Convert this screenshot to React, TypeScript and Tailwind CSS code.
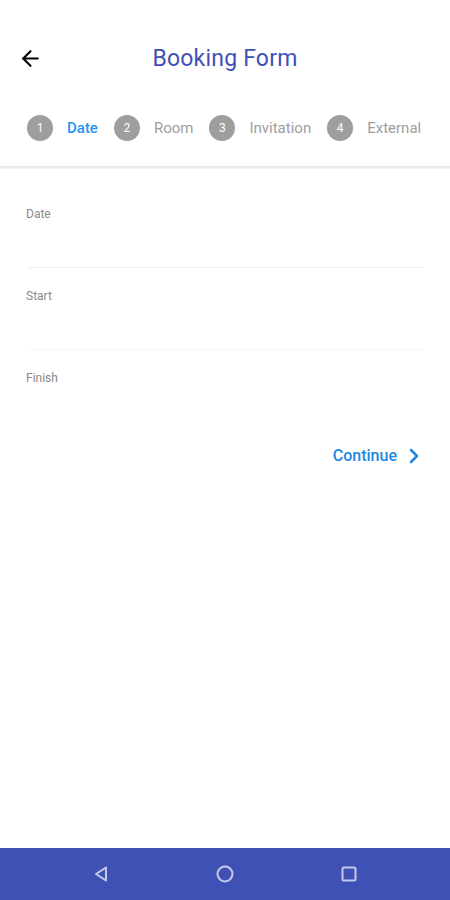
import { ArrowLeft, ChevronRight } from 'lucide-react';

const steps = [
  { n: 1, label: 'Date', active: true },
  { n: 2, label: 'Room', active: false },
  { n: 3, label: 'Invitation', active: false },
  { n: 4, label: 'External', active: false },
];

const fields = [
  { label: 'Date', line: 'border-[#f1f1f1]' },
  { label: 'Start', line: 'border-[#f6f6f6]' },
  { label: 'Finish', line: 'border-transparent' },
];

function App() {
  return (
    <div className="h-[900px] w-[450px] bg-white flex flex-col overflow-hidden font-['Roboto',sans-serif]">
      {/* Header */}
      <div className="relative mt-[35px] h-12 flex items-center justify-center">
        <button className="absolute left-[18px] top-[11px] text-black">
          <ArrowLeft size={25} strokeWidth={2} />
        </button>
        <h1 className="text-[23px] text-[#3f51b5] tracking-[0.2px]">Booking Form</h1>
      </div>

      {/* Stepper */}
      <div className="mt-[32px] pb-[25px] pl-[27px] flex items-center h-[26px] box-content">
        {steps.map((s) => (
          <div key={s.n} className="flex items-center mr-[16px]">
            <div className="w-[26px] h-[26px] rounded-full bg-[#9e9e9e] text-white text-[12px] flex items-center justify-center">
              {s.n}
            </div>
            <span
              className={
                'ml-[14px] text-[15px] ' + (s.active ? 'text-[#2196f3] font-medium' : 'text-[#9e9e9e]')
              }
            >
              {s.label}
            </span>
          </div>
        ))}
      </div>
      <div className="h-[3px] bg-gradient-to-b from-[#e6e6e6] to-[#f7f7f7]" />

      {/* Form */}
      <div className="px-[26px] pt-[37px] flex flex-col">
        {fields.map((f) => (
          <div key={f.label} className="mb-[20px]">
            <div className="text-[12px] leading-4 text-[#8a8a8a]">{f.label}</div>
            <div className={'h-[46px] ml-[2px] border-b ' + f.line} />
          </div>
        ))}
        <div className="flex justify-end mt-[-8px] mr-[-2px]">
          <button className="flex items-center text-[#1e88e5] text-[16px] font-medium">
            Continue
            <ChevronRight size={24} strokeWidth={2.5} className="ml-[5px]" />
          </button>
        </div>
      </div>

      <div className="flex-1" />

      {/* Nav bar */}
      <div className="h-[52px] bg-[#3f51b5] flex items-center justify-center gap-[106px] text-[#c5cae9]">
        <svg width="18" height="18" viewBox="0 0 18 18" fill="none" stroke="currentColor" strokeWidth="2">
          <path d="M14 2.5 L4 9 L14 15.5 Z" strokeLinejoin="round" />
        </svg>
        <svg width="18" height="18" viewBox="0 0 18 18" fill="none" stroke="currentColor" strokeWidth="2">
          <circle cx="9" cy="9" r="7.5" />
        </svg>
        <svg width="18" height="18" viewBox="0 0 18 18" fill="none" stroke="currentColor" strokeWidth="2">
          <rect x="2.5" y="2.5" width="13" height="13" rx="1.5" />
        </svg>
      </div>
    </div>
  );
}

export default App;
